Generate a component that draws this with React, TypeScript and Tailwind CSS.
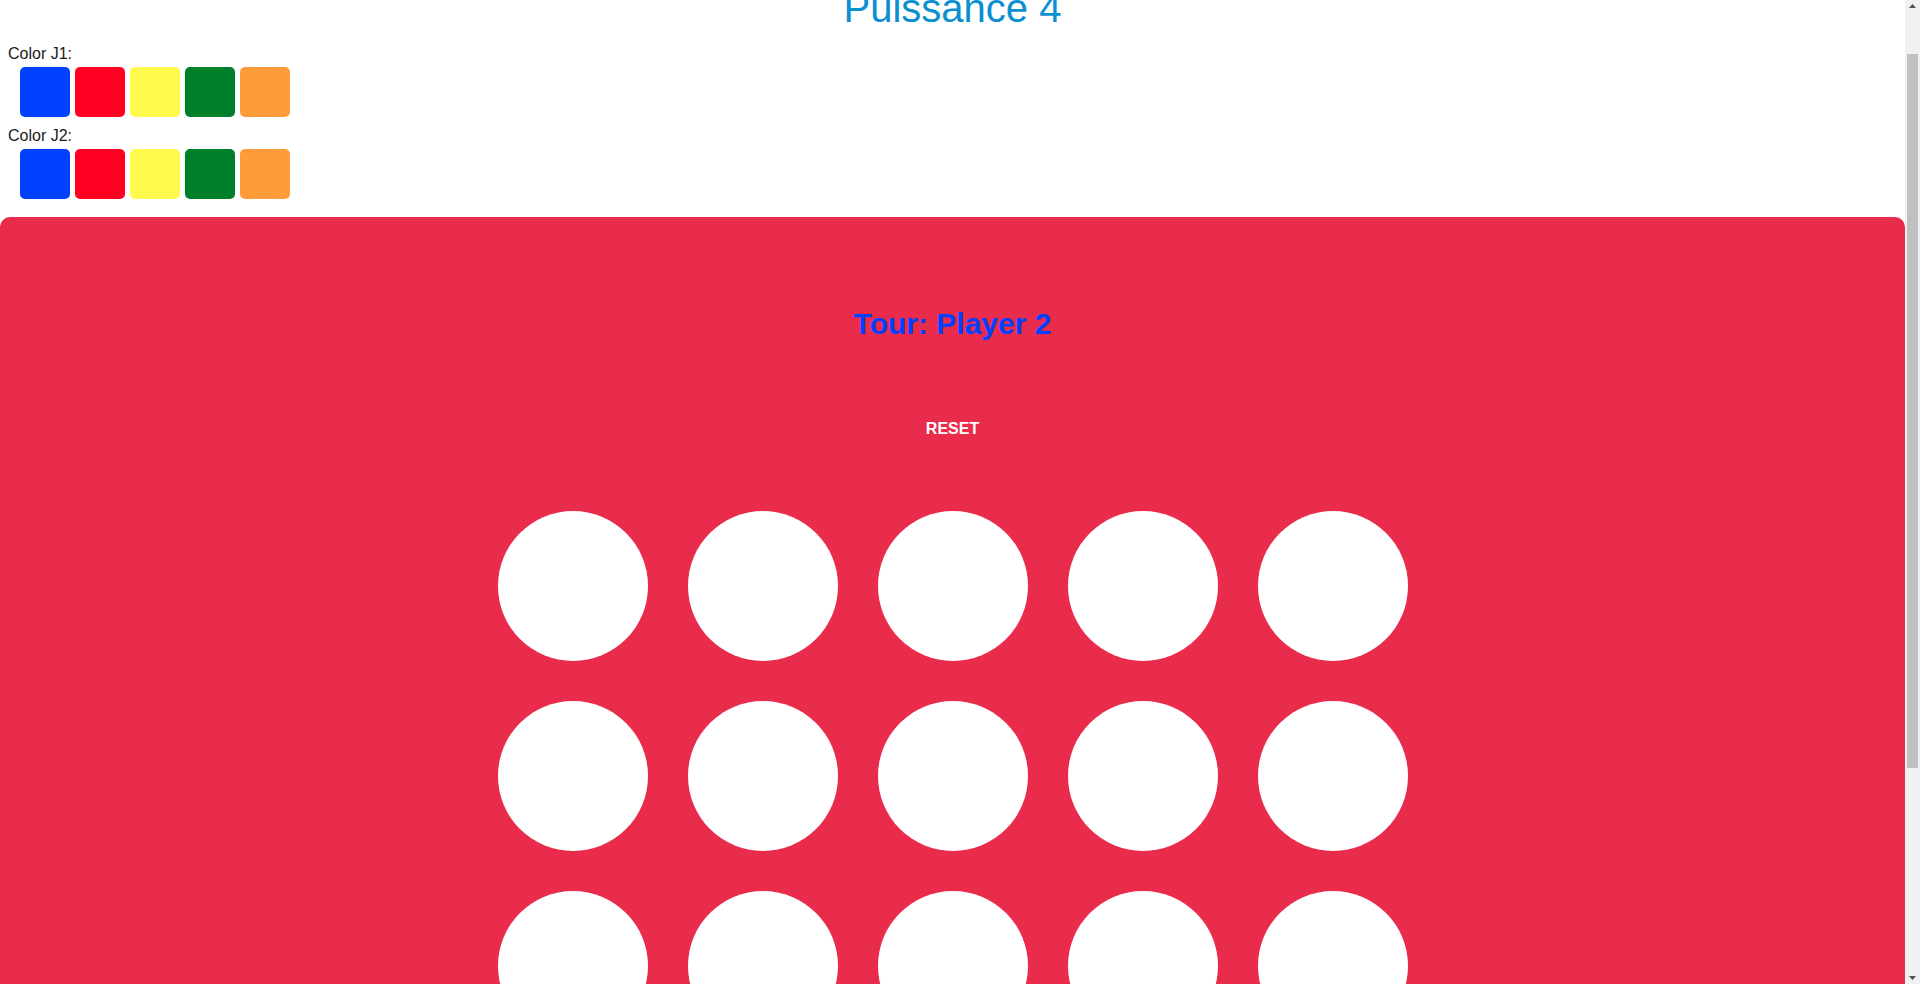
import React, { useLayoutEffect } from "react";

const COLORS = ["#0040ff", "#ff0022", "#fff94d", "#007f2a", "#ff9c3a"];

function Swatches() {
  return (
    <div className="flex gap-[5px] pl-[12px] mt-[4px]">
      {COLORS.map((c) => (
        <div key={c} className="w-[50px] h-[50px] rounded-[5px]" style={{ backgroundColor: c }} />
      ))}
    </div>
  );
}

function FakeScrollbar() {
  return (
    <div className="fixed top-0 right-0 w-[15px] h-[984px] bg-[#f1f1f1] z-10">
      <svg className="absolute top-[3px] left-[3px]" width="9" height="6" viewBox="0 0 9 6">
        <polygon points="1,5 4.5,1 8,5" fill="#505050" />
      </svg>
      <div className="absolute top-[54px] left-[2px] w-[11px] h-[714px] bg-[#c1c1c1]" />
      <svg className="absolute bottom-[3px] left-[3px]" width="9" height="6" viewBox="0 0 9 6">
        <polygon points="1,1 8,1 4.5,5" fill="#505050" />
      </svg>
    </div>
  );
}

export default function App() {
  useLayoutEffect(() => {
    window.scrollTo(0, 51);
    const t = setTimeout(() => window.scrollTo(0, 51), 0);
    return () => clearTimeout(t);
  }, []);

  return (
    <div className="w-[1905px] bg-white text-[#1a1a1a] font-['Liberation_Sans',Arial,sans-serif]">
      <FakeScrollbar />
      <h1 className="pt-[36px] h-[82px] text-center text-[40px] leading-[46px] text-[#0a8fd0] font-normal">
        Puissance 4
      </h1>
      <div className="pl-[8px] mt-[14px]">
        <div className="text-[16px] leading-[18px] h-[18px]">Color J1:</div>
        <Swatches />
        <div className="text-[16px] leading-[18px] h-[18px] mt-[10px]">Color J2:</div>
        <Swatches />
      </div>
      <div className="mt-[18px] w-full bg-[#e92c4b] rounded-[10px] pt-[90px] pb-[27px] flex flex-col items-center">
        <h2 className="text-[30px] leading-[34px] font-bold text-[#0040ff]">Tour: Player 2</h2>
        <button className="mt-[79px] text-[16px] leading-[18px] font-bold text-white bg-transparent">RESET</button>
        <div className="mt-[73px] grid grid-cols-5 gap-[40px]">
          {Array.from({ length: 20 }).map((_, i) => (
            <div key={i} className="w-[150px] h-[150px] rounded-full bg-white" />
          ))}
        </div>
      </div>
    </div>
  );
}
